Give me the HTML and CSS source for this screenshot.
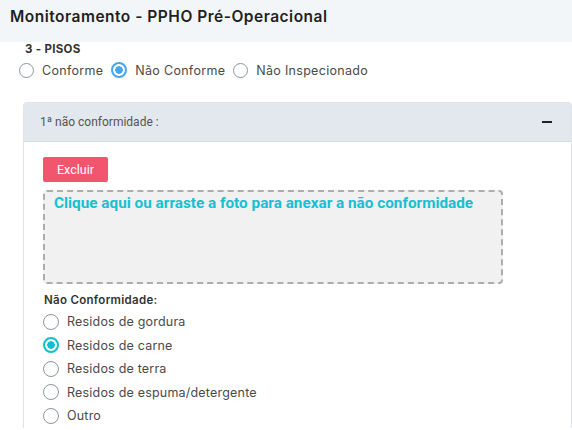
FILE: index.html
```html
<!DOCTYPE html>
<html lang="pt-BR">
<head>
    <meta charset="UTF-8">
    <meta name="viewport" content="width=device-width, initial-scale=1.0">
    <title>Monitoramento - PPHO Pré-Operacional</title>
    <link rel="stylesheet" href="styles.css">
</head>
<body>

<div class="page-header">
    <h1>Monitoramento - PPHO Pré-Operacional</h1>
</div>

<div class="content">

    <div class="item">
        <div class="item-title">3 - PISOS</div>
        <div class="status-options">
            <label class="radio"><input type="radio" name="status"> Conforme</label>
            <label class="radio"><input type="radio" name="status" checked> Não Conforme</label>
            <label class="radio"><input type="radio" name="status"> Não Inspecionado</label>
        </div>
    </div>

    <div class="card">
        <div class="card-header">
            <span>1ª não conformidade :</span>
            <span class="collapse-icon"></span>
        </div>
        <div class="card-body">
            <button class="delete-button">Excluir</button>

            <div class="dropzone">
                Clique aqui ou arraste a foto para anexar a não conformidade
            </div>

            <div class="field-label">Não Conformidade:</div>
            <div class="nc-options">
                <label class="radio nc"><input type="radio" name="nc"> Residos de gordura</label>
                <label class="radio nc"><input type="radio" name="nc" checked> Residos de carne</label>
                <label class="radio nc"><input type="radio" name="nc"> Residos de terra</label>
                <label class="radio nc"><input type="radio" name="nc"> Residos de espuma/detergente</label>
                <label class="radio nc"><input type="radio" name="nc"> Outro</label>
            </div>
        </div>
    </div>

</div>

</body>
</html>
```

FILE: styles.css
```css
body {
    margin: 0;
    font-family: Inter, "Noto Sans", sans-serif;
    background-color: white;
    color: #333;
    overflow: hidden;
}

.page-header {
    background-color: #f3f6f9;
    height: 42px;
    padding: 0 10px;
    display: flex;
    align-items: center;
}

.page-header h1 {
    margin: 0 0 10px 0;
    font-size: 15.5px;
    font-weight: 600;
    letter-spacing: 0.5px;
    color: #1f1f1f;
}

.content {
    padding-left: 23px;
}

.item-title {
    font-size: 11.5px;
    font-weight: 700;
    letter-spacing: 0.3px;
    color: #333;
    margin: 0 0 0 2px;
    line-height: 14px;
}

.status-options {
    display: flex;
    margin-left: -4px;
    margin-top: 2px;
}

.radio {
    display: flex;
    align-items: center;
    font-size: 12.5px;
    letter-spacing: 0.3px;
    color: #4a4a4a;
    margin-right: 8px;
    height: 24px;
}

.radio input {
    appearance: none;
    width: 15px;
    height: 15px;
    margin: 0 8px 0 0;
    border: 1.5px solid #8c959d;
    border-radius: 50%;
    background-color: white;
    box-sizing: border-box;
}

.radio input:checked {
    width: 16px;
    height: 16px;
    border-color: #45a6ee;
    border-width: 2px;
    background: radial-gradient(circle, #45a6ee 0 3.5px, white 4px);
}

.card {
    margin-top: 20px;
    border: 1px solid #e0e4e8;
    border-radius: 4px 4px 0 0;
    border-bottom: none;
}

.card-header {
    background-color: #e3e8ee;
    height: 38px;
    display: flex;
    align-items: center;
    justify-content: space-between;
    padding: 0 19px 0 16px;
    border-bottom: 1px solid #d8dde3;
    font-family: Roboto, sans-serif;
    font-size: 12px;
    color: #555;
}

.collapse-icon {
    width: 10px;
    height: 2.5px;
    background-color: #222;
}

.card-body {
    padding: 15px 19px 0 19px;
}

.delete-button {
    display: block;
    background-color: #f2566f;
    color: white;
    font-family: Roboto, sans-serif;
    font-size: 12.5px;
    border: none;
    border-radius: 2px;
    padding: 0 14px;
    height: 25px;
    cursor: pointer;
}

.dropzone {
    margin-top: 8px;
    width: 460px;
    height: 94px;
    box-sizing: border-box;
    background-color: #f1f1f1;
    border: 2px dashed #adadad;
    border-radius: 4px;
    padding: 2px 9px 0 9px;
    font-family: Roboto, sans-serif;
    font-weight: 700;
    font-size: 15.3px;
    color: #16c0d2;
}

.field-label {
    font-size: 11.5px;
    font-weight: 600;
    letter-spacing: 0.3px;
    color: #333;
    margin-top: 9px;
    margin-left: 1px;
}

.nc-options {
    margin-top: 3px;
}

.radio.nc {
    height: 23.5px;
    font-size: 12.5px;
    letter-spacing: 0.2px;
}

.radio.nc input {
    width: 16px;
    height: 16px;
}

.radio.nc input:checked {
    border: 2.5px solid #10c0cf;
    background: radial-gradient(circle, #10c0cf 0 3.5px, white 4px);
}
```
